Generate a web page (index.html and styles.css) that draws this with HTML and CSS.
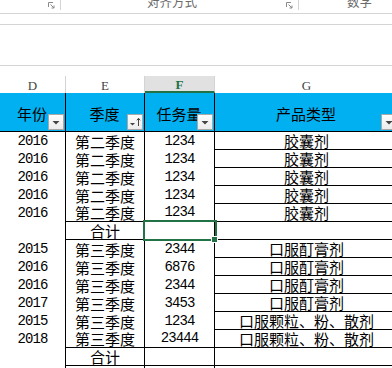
FILE: index.html
```html
<!DOCTYPE html>
<html lang="zh">
<head>
<meta charset="utf-8">
<link rel="stylesheet" href="styles.css">
</head>
<body>
<div class="ribbon">
  <div class="grp g1"><svg class="launch" width="7" height="7" viewBox="0 0 7 7"><path d="M0.5 5V0.5H5" fill="none" stroke="#8a8a8a"/><path d="M2.5 2.5L6 6M6 3.5V6H3.5" fill="none" stroke="#8a8a8a"/></svg></div>
  <div class="grp g2"><span class="glabel l2">对齐方式</span><svg class="launch" width="7" height="7" viewBox="0 0 7 7"><path d="M0.5 5V0.5H5" fill="none" stroke="#8a8a8a"/><path d="M2.5 2.5L6 6M6 3.5V6H3.5" fill="none" stroke="#8a8a8a"/></svg></div>
  <div class="grp g3"><span class="glabel l3">数字</span></div>
</div>
<div class="strip"></div>
<div class="fbar"></div>
<div class="gap"></div>
<div class="sheet">
  <div class="col">D</div><div class="col">E</div><div class="col sel">F</div><div class="col">G</div>

  <div class="hd"><span class="ht">年份</span><span class="fb"><svg width="14" height="14" viewBox="0 0 14 14"><path d="M3.5 6h7l-3.5 3.5z" fill="#444"/></svg></span></div>
  <div class="hd"><span class="ht">季度</span><span class="fb"><svg width="14" height="14" viewBox="0 0 14 14"><path d="M2 8h5l-2.5 2.5z" fill="#444"/><path d="M10.5 11V3.5M8.8 5.3l1.7-2 1.7 2" fill="none" stroke="#444" stroke-width="1"/></svg></span></div>
  <div class="hd"><span class="ht">任务量</span><span class="fb"><svg width="14" height="14" viewBox="0 0 14 14"><path d="M3.5 6h7l-3.5 3.5z" fill="#444"/></svg></span></div>
  <div class="hd"><span class="ht">产品类型</span><span class="fb"><svg width="14" height="14" viewBox="0 0 14 14"><path d="M3.5 6h7l-3.5 3.5z" fill="#444"/></svg></span></div>

  <div class="c n">2016</div><div class="c">第二季度</div><div class="c n">1234</div><div class="c rb">胶囊剂</div>
  <div class="c n">2016</div><div class="c">第二季度</div><div class="c n">1234</div><div class="c rb">胶囊剂</div>
  <div class="c n">2016</div><div class="c">第二季度</div><div class="c n">1234</div><div class="c rb">胶囊剂</div>
  <div class="c n">2016</div><div class="c">第二季度</div><div class="c n">1234</div><div class="c rb">胶囊剂</div>
  <div class="c n">2016</div><div class="c rb">第二季度</div><div class="c n rb">1234</div><div class="c rb">胶囊剂</div>
  <div class="c"></div><div class="c rb">合计</div><div class="c rb"></div><div class="c rb"></div>

  <div class="c n">2015</div><div class="c">第三季度</div><div class="c n">2344</div><div class="c rb">口服酊膏剂</div>
  <div class="c n">2016</div><div class="c">第三季度</div><div class="c n">6876</div><div class="c rb">口服酊膏剂</div>
  <div class="c n">2016</div><div class="c">第三季度</div><div class="c n">2344</div><div class="c rb">口服酊膏剂</div>
  <div class="c n">2017</div><div class="c">第三季度</div><div class="c n">3453</div><div class="c rb">口服酊膏剂</div>
  <div class="c n">2015</div><div class="c">第三季度</div><div class="c n">1234</div><div class="c rb">口服颗粒、粉、散剂</div>
  <div class="c n">2018</div><div class="c rb">第三季度</div><div class="c n rb">23444</div><div class="c rb">口服颗粒、粉、散剂</div>
  <div class="c"></div><div class="c rb">合计</div><div class="c rb"></div><div class="c rb"></div>
  <div class="c"></div><div class="c"></div><div class="c"></div><div class="c"></div>

  <div class="selbox"></div>
  <div class="handle"></div>
</div>
</body>
</html>
```
FILE: styles.css
```css
html, body {
  margin: 0;
  padding: 0;
  background: #fff;
  overflow: hidden;
  width: 392px;
  height: 368px;
  font-family: "Noto Sans CJK SC", "Liberation Sans", sans-serif;
  color: #000;
}

.ribbon {
  height: 13px;
  border-bottom: 1px solid #d4d4d4;
  display: grid;
  grid-template-columns: 61px 238px 100px;
  overflow: hidden;
}
.grp {
  position: relative;
  box-sizing: border-box;
  border-right: 1px solid #d4d4d4;
  height: 10px;
  display: flex;
}
.g3 { border-right: none; }
.launch {
  position: absolute;
  right: 5px;
  top: 2px;
}
.glabel {
  font-size: 12.5px;
  line-height: 14px;
  color: #6a6a6a;
  margin-top: -5px;
  white-space: nowrap;
}
.l2 { margin-left: 86px; }
.l3 { margin-left: 48px; }

.strip {
  height: 10px;
  border-bottom: 1px solid #d4d4d4;
}
.fbar {
  height: 40px;
  border-bottom: 1px solid #d4d4d4;
}
.gap {
  height: 10px;
}

.sheet {
  position: relative;
  display: grid;
  grid-template-columns: 66px 79px 70px 184px;
  width: 399px;
}

.col {
  box-sizing: border-box;
  height: 17px;
  border-right: 1px solid #d4d4d4;
  display: flex;
  align-items: center;
  justify-content: center;
  padding-top: 2px;
  font-family: "Liberation Serif", serif;
  font-size: 13px;
  color: #444;
}
.col.sel {
  background: #e1e1e1;
  border-bottom: 2px solid #217346;
  color: #217346;
  font-weight: bold;
  padding-top: 3px;
}

.hd {
  box-sizing: border-box;
  height: 39px;
  background: #00b0f0;
  border-right: 1px solid #000;
  border-bottom: 1px solid #000;
  display: grid;
  grid-template-columns: 100%;
  grid-template-rows: 100%;
  padding: 0 1px 1px 0;
  font-size: 15px;
  line-height: 18px;
}
.ht {
  grid-area: 1 / 1;
  justify-self: center;
  align-self: center;
  margin-top: 5px;
  white-space: nowrap;
}
.fb {
  grid-area: 1 / 1;
  justify-self: end;
  align-self: end;
  box-sizing: border-box;
  width: 16px;
  height: 16px;
  border: 1px solid #a8a8a8;
  background: linear-gradient(#fdfdfd, #ececec);
  display: flex;
}

.c {
  box-sizing: border-box;
  height: 18px;
  border-right: 1px solid #000;
  display: flex;
  align-items: center;
  justify-content: center;
  font-size: 15px;
  line-height: 17px;
  white-space: nowrap;
}
.c.rb { border-bottom: 1px solid #000; }
.c.n {
  font-family: "Liberation Mono", monospace;
  font-size: 14px;
  letter-spacing: -0.9px;
}

.selbox {
  position: absolute;
  left: 143px;
  top: 144px;
  width: 74px;
  height: 21px;
  box-sizing: border-box;
  border: 2px solid #217346;
}
.handle {
  position: absolute;
  left: 211px;
  top: 160px;
  width: 5px;
  height: 5px;
  background: #217346;
  border: 1px solid #fff;
}
```
